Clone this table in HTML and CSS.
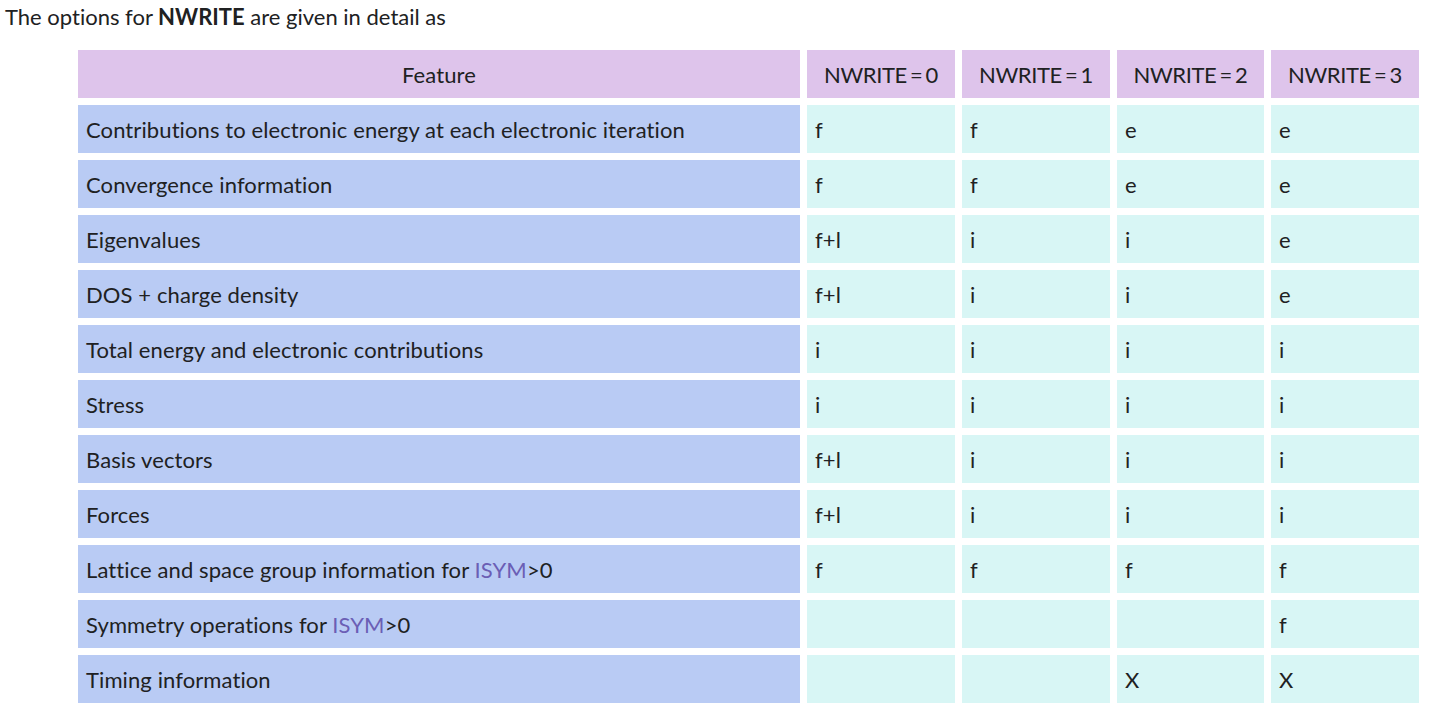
FILE: index.html
```html
<!DOCTYPE html>
<html>
<head>
<meta charset="utf-8">
<link rel="stylesheet" href="styles.css">
</head>
<body>
<p class="intro">The options for <strong>NWRITE</strong> are given in detail as</p>
<table class="opts">
  <colgroup>
    <col class="c-feat"><col class="c-val"><col class="c-val"><col class="c-val2"><col class="c-val">
  </colgroup>
  <thead>
    <tr><th>Feature</th><th class="nw">NWRITE = 0</th><th class="nw">NWRITE = 1</th><th class="nw">NWRITE = 2</th><th class="nw">NWRITE = 3</th></tr>
  </thead>
  <tbody>
    <tr><td class="feat">Contributions to electronic energy at each electronic iteration</td><td>f</td><td>f</td><td>e</td><td>e</td></tr>
    <tr><td class="feat">Convergence information</td><td>f</td><td>f</td><td>e</td><td>e</td></tr>
    <tr><td class="feat">Eigenvalues</td><td>f+l</td><td>i</td><td>i</td><td>e</td></tr>
    <tr><td class="feat">DOS + charge density</td><td>f+l</td><td>i</td><td>i</td><td>e</td></tr>
    <tr><td class="feat">Total energy and electronic contributions</td><td>i</td><td>i</td><td>i</td><td>i</td></tr>
    <tr><td class="feat">Stress</td><td>i</td><td>i</td><td>i</td><td>i</td></tr>
    <tr><td class="feat">Basis vectors</td><td>f+l</td><td>i</td><td>i</td><td>i</td></tr>
    <tr><td class="feat">Forces</td><td>f+l</td><td>i</td><td>i</td><td>i</td></tr>
    <tr><td class="feat">Lattice and space group information for <a href="#">ISYM</a>&gt;0</td><td>f</td><td>f</td><td>f</td><td>f</td></tr>
    <tr><td class="feat">Symmetry operations for <a href="#">ISYM</a>&gt;0</td><td></td><td></td><td></td><td>f</td></tr>
    <tr><td class="feat">Timing information</td><td></td><td></td><td>X</td><td>X</td></tr>
  </tbody>
</table>
</body>
</html>
```

FILE: styles.css
```css
html, body {
  margin: 0;
  padding: 0;
  background: #ffffff;
}
body {
  padding: 0 5px;
  font-family: Lato, "Liberation Sans", sans-serif;
  font-size: 22px;
  font-variant-ligatures: none;
  color: #202122;
}
.intro {
  margin: 0;
  padding-top: 3px;
  line-height: 28px;
  height: 40px;
}
.intro strong {
  font-weight: 700;
}
.opts {
  margin-left: 66px;
  border-collapse: separate;
  border-spacing: 7px;
  table-layout: fixed;
  width: 1355px;
  letter-spacing: 0.1px;
}
.c-feat { width: 722px; }
.c-val { width: 148px; }
.c-val2 { width: 147px; }
.opts th, .opts td {
  height: 48px;
  padding: 1px 8px 0;
  box-sizing: border-box;
  font-size: 22px;
  line-height: 26px;
  vertical-align: middle;
}
.opts th {
  background: #dec4eb;
  font-weight: 400;
  text-align: center;
}
.opts th.nw {
  letter-spacing: -0.4px;
  word-spacing: -2px;
}
.opts td {
  background: #d8f6f5;
  text-align: left;
}
.opts td.feat {
  background: #b9cbf4;
}
.opts a {
  color: #6b5eb5;
  text-decoration: none;
}
```
